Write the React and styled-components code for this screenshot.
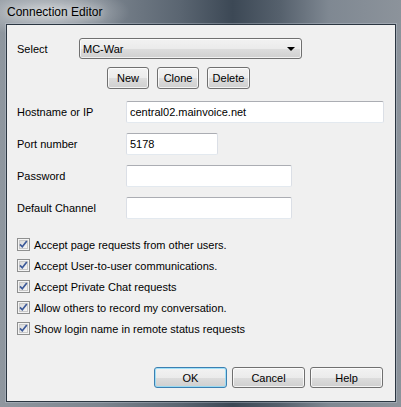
import React from "react";
import styled, { createGlobalStyle } from "styled-components";

const Global = createGlobalStyle`
  html, body { margin: 0; padding: 0; background: #6f7883; }
  * { box-sizing: border-box; }
`;

const Frame = styled.div`
  width: 401px;
  height: 407px;
  display: flex;
  flex-direction: column;
  padding: 0 5px 5px 6px;
  font-family: "Liberation Sans", Arial, sans-serif;
  font-size: 11px;
  color: #000;
  background:
    radial-gradient(ellipse 80px 26px at 50px 12px, rgba(255,255,255,0.55), rgba(255,255,255,0) 100%),
    linear-gradient(90deg, #8f979f 0%, #7c858f 25%, #5a6571 45%, #3c4855 58%, #56616d 70%, #7f8892 82%, #8c939b 100%);
`;

const TitleBar = styled.div`
  height: 24px;
  display: flex;
  align-items: center;
  padding-left: 1px;
  font-family: "Liberation Sans", Arial, sans-serif;
  font-size: 12px;
  color: #000;
  text-shadow: 0 0 8px rgba(255,255,255,0.9);
`;

const Client = styled.div`
  flex: 1;
  border: 1px solid #2b3641;
  background: #f0f0f0;
  padding: 13px 10px 0 10px;
  display: flex;
  flex-direction: column;
  box-shadow: 0 0 0 1px rgba(200,210,220,0.35);
`;

const SelectRow = styled.div`
  display: grid;
  grid-template-columns: 62px 223px;
  align-items: center;
  height: 21px;
`;

const Label = styled.span`
  white-space: nowrap;
`;

const Dropdown = styled.div`
  height: 21px;
  border: 1px solid #707070;
  border-radius: 3px;
  background: linear-gradient(#f2f2f2 0%, #ebebeb 50%, #dddddd 51%, #cfcfcf 100%);
  display: flex;
  align-items: center;
  justify-content: space-between;
  padding: 0 6px 0 3px;
  box-shadow: inset 0 0 0 1px rgba(255,255,255,0.7);
`;

const Arrow = styled.span`
  width: 0;
  height: 0;
  border-left: 4px solid transparent;
  border-right: 4px solid transparent;
  border-top: 4px solid #000;
`;

const ButtonRow = styled.div`
  display: flex;
  gap: ${(p) => p.$gap}px;
  margin-top: ${(p) => p.$top}px;
  padding-left: ${(p) => p.$left}px;
`;

const Button = styled.button`
  width: ${(p) => p.$w}px;
  height: ${(p) => p.$h}px;
  padding: 0;
  font-family: "Liberation Sans", Arial, sans-serif;
  font-size: 11px;
  color: #000;
  border: 1px solid ${(p) => (p.$default ? "#3c7fb1" : "#707070")};
  border-radius: 3px;
  background: linear-gradient(#f2f2f2 0%, #ebebeb 50%, #dddddd 51%, #cfcfcf 100%);
  box-shadow: inset 0 0 0 1px ${(p) => (p.$default ? "rgba(140,220,250,0.8)" : "rgba(255,255,255,0.75)")};
`;

const Fields = styled.div`
  display: flex;
  flex-direction: column;
  gap: 10px;
  margin-top: 12px;
`;

const FieldRow = styled.div`
  display: grid;
  grid-template-columns: 109px auto;
  align-items: center;
`;

const Input = styled.div`
  width: ${(p) => p.$w}px;
  height: 22px;
  background: #fff;
  border: 1px solid #dbdfe6;
  border-top-color: #abadb3;
  border-bottom-color: #e3e9ef;
  border-radius: 2px;
  display: flex;
  align-items: center;
  padding-left: 3px;
`;

const Checks = styled.div`
  display: flex;
  flex-direction: column;
  margin-top: 15px;
`;

const CheckRow = styled.label`
  display: flex;
  align-items: center;
  gap: 4px;
  height: 21px;
`;

const Box = () => (
  <svg width="13" height="13" viewBox="0 0 13 13">
    <defs>
      <linearGradient id="cbg" x1="0" y1="0" x2="1" y2="1">
        <stop offset="0" stopColor="#d8d8d8" />
        <stop offset="1" stopColor="#f8f8f8" />
      </linearGradient>
    </defs>
    <rect x="0.5" y="0.5" width="12" height="12" fill="#f4f4f4" stroke="#8e8f8f" />
    <rect x="2.5" y="2.5" width="8" height="8" fill="url(#cbg)" stroke="#c9c9c9" />
    <path d="M3 6.3 L5.3 8.8 L9.8 3" fill="none" stroke="#3d5a99" strokeWidth="1.7" />
  </svg>
);

const Spacer = styled.div`
  flex: 1;
`;

const Footer = styled.div`
  display: flex;
  justify-content: flex-end;
  gap: 5px;
  padding-right: 2px;
  margin-bottom: 13px;
`;

const checks = [
  "Accept page requests from other users.",
  "Accept User-to-user communications.",
  "Accept Private Chat requests",
  "Allow others to record my conversation.",
  "Show login name in remote status requests",
];

const fields = [
  ["Hostname or IP", 258, "central02.mainvoice.net"],
  ["Port number", 92, "5178"],
  ["Password", 166, ""],
  ["Default Channel", 166, ""],
];

export default function App() {
  return (
    <>
      <Global />
      <Frame>
        <TitleBar>Connection Editor</TitleBar>
        <Client>
          <SelectRow>
            <Label>Select</Label>
            <Dropdown>
              <span>MC-War</span>
              <Arrow />
            </Dropdown>
          </SelectRow>
          <ButtonRow $gap={8} $top={8} $left={90}>
            <Button $w={42} $h={22}>New</Button>
            <Button $w={42} $h={22}>Clone</Button>
            <Button $w={43} $h={22}>Delete</Button>
          </ButtonRow>
          <Fields>
            {fields.map(([l, w, v]) => (
              <FieldRow key={l}>
                <Label>{l}</Label>
                <Input $w={w}>{v}</Input>
              </FieldRow>
            ))}
          </Fields>
          <Checks>
            {checks.map((c) => (
              <CheckRow key={c}>
                <Box />
                <span>{c}</span>
              </CheckRow>
            ))}
          </Checks>
          <Spacer />
          <Footer>
            <Button $w={73} $h={21} $default>OK</Button>
            <Button $w={73} $h={21}>Cancel</Button>
            <Button $w={73} $h={21}>Help</Button>
          </Footer>
        </Client>
      </Frame>
    </>
  );
}
